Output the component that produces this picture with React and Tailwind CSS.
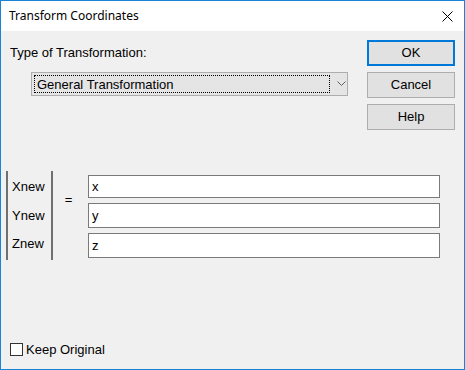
import React from 'react';

const font = { fontFamily: '"Liberation Sans", Arial, sans-serif' };

const Field = ({ value }) => (
  <div className="h-full border border-[#7a7a7a] bg-white pl-[3px] flex items-center text-[13px] text-black leading-none">
    {value}
  </div>
);

const Button = ({ label, primary }) => (
  <div
    className={
      'w-[88px] h-[26px] flex items-center justify-center text-[13px] text-black bg-[#e1e1e1] ' +
      (primary ? 'border-2 border-[#0078d7]' : 'border border-[#adadad]')
    }
  >
    {label}
  </div>
);

export default function App() {
  return (
    <div className="w-[465px] h-[370px] bg-[#f0f0f0] border border-[#1883d7] flex flex-col overflow-hidden" style={font}>
      {/* title bar */}
      <div className="h-[30px] bg-white flex items-center justify-between pl-[8px] pr-[10px] shrink-0">
        <span className="text-[12px] text-black" style={{ fontFamily: '"Segoe UI", "Noto Sans", sans-serif' }}>
          Transform Coordinates
        </span>
        <svg width="11" height="11" viewBox="0 0 11 11" className="mr-[1px]">
          <path d="M0.5 0.5 L10.5 10.5 M10.5 0.5 L0.5 10.5" stroke="#000" strokeWidth="1" />
        </svg>
      </div>

      {/* body */}
      <div className="flex-1 flex flex-col pl-[9px] pr-[9px]">
        <div className="flex justify-between">
          <div className="flex flex-col">
            <div className="text-[13px] text-black mt-[14px] leading-[16px]">Type of Transformation:</div>
            <div className="ml-[21px] mt-[11px] w-[317px] h-[24px] bg-[#e5e5e5] border border-[#adadad] flex items-center">
              <div className="ml-[2px] w-[296px] h-[18px] border border-dotted border-black flex items-center pl-[2px] text-[13px] text-black leading-none">
                General Transformation
              </div>
              <svg width="9" height="6" viewBox="0 0 9 6" className="ml-[7px]">
                <path d="M0.5 0.5 L4.5 4.5 L8.5 0.5" fill="none" stroke="#606060" strokeWidth="1" />
              </svg>
            </div>
          </div>
          <div className="flex flex-col gap-[6px] mt-[9px]">
            <Button label="OK" primary />
            <Button label="Cancel" />
            <Button label="Help" />
          </div>
        </div>

        <div className="flex mt-[41px] ml-[-4px]">
          <div className="flex h-[89px]">
            <div className="w-[2px] bg-[#707070]" />
            <div className="flex flex-col justify-around pl-[4px] w-[43px] text-[13px] text-black py-[2px]">
              <span>Xnew</span>
              <span>Ynew</span>
              <span>Znew</span>
            </div>
            <div className="w-[2px] bg-[#707070]" />
          </div>
          <div className="w-[35px] flex justify-center text-[13px] text-black pt-[19px] pr-[4px]">=</div>
          <div className="flex flex-col w-[352px] mt-[4px]">
            <div className="h-[23px]"><Field value="x" /></div>
            <div className="h-[25px] mt-[5px]"><Field value="y" /></div>
            <div className="h-[25px] mt-[5px]"><Field value="z" /></div>
          </div>
        </div>

        <div className="mt-auto mb-[10px] flex items-center">
          <div className="w-[13px] h-[13px] border border-[#333] bg-white" />
          <span className="ml-[3px] text-[13px] text-black">Keep Original</span>
        </div>
      </div>
    </div>
  );
}
